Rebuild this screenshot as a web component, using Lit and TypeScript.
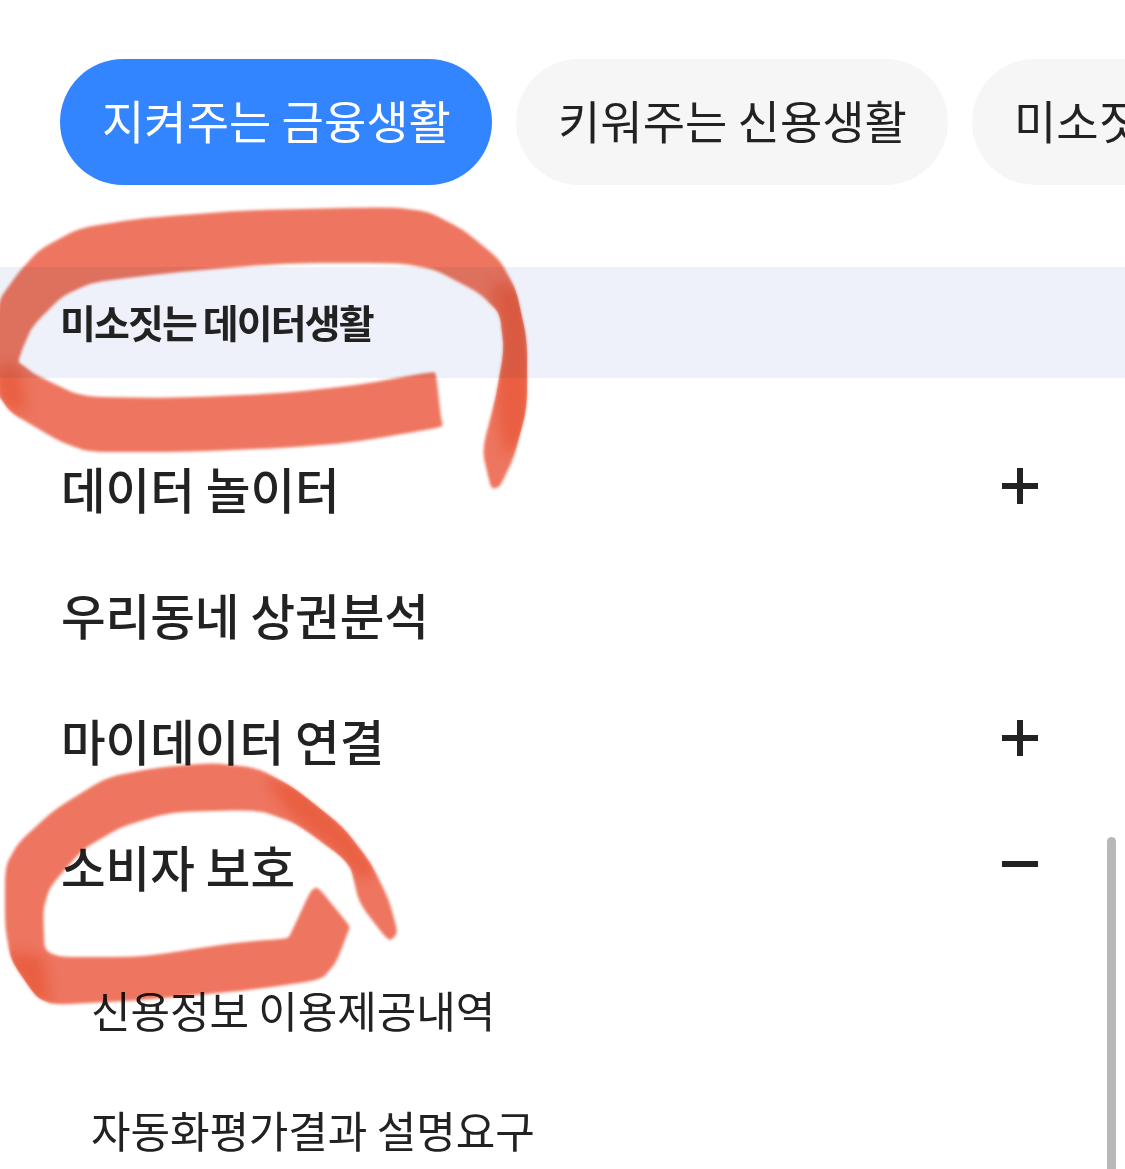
import { LitElement, html, css, svg } from "lit";
import { customElement } from "lit/decorators.js";

type Pt = [number, number];

// Rounds each corner of a hand-traced outline, keeping the long edges straight like a marker stroke.
const outline = (p: Pt[], cut = 0.28) => {
  const at = (a: Pt, b: Pt, t: number): Pt => [
    +(a[0] + (b[0] - a[0]) * t).toFixed(1),
    +(a[1] + (b[1] - a[1]) * t).toFixed(1),
  ];
  let d = "";
  p.forEach((c, i) => {
    const prev = p[(i + p.length - 1) % p.length];
    const next = p[(i + 1) % p.length];
    const a = at(c, prev, cut);
    const b = at(c, next, cut);
    d += `${i ? "L" : "M"}${a[0]} ${a[1]} Q${c[0]} ${c[1]} ${b[0]} ${b[1]} `;
  });
  return d + "Z";
};

const loopOne: Pt[] = [
  [432, 372], [436, 373], [441, 418], [443, 426], [436, 428], [357, 442], [286, 448], [179, 452], [89, 452], [61, 442], [11, 413], [-3, 393],
  [-3, 303], [18, 273], [39, 250], [79, 228], [143, 218], [250, 210], [393, 207], [429, 212], [464, 230], [500, 260],
  [516, 290], [527, 340], [527, 407], [514, 457], [500, 487], [491, 489], [482, 450], [496, 397], [504, 350], [500, 313],
  [479, 293], [436, 270], [400, 263], [286, 263], [179, 272], [93, 282], [61, 297], [32, 327], [22, 350], [18, 362], [25, 367], [36, 375],
  [82, 397], [179, 398], [286, 393], [357, 385],
];

const loopTwo: Pt[] = [
  [389, 942], [398, 933], [389, 900], [371, 863], [343, 827], [293, 787], [257, 768], [214, 763], [161, 767], [107, 777],
  [54, 810], [18, 843], [5, 867], [5, 927], [11, 960], [36, 997], [54, 1005], [143, 1000], [250, 990], [321, 980],
  [336, 963], [347, 935], [350, 927], [345, 920], [318, 887], [311, 890], [291, 933], [288, 938], [280, 939], [232, 943], [143, 957], [45, 957], [43, 910], [50, 887],
  [82, 850], [121, 827], [171, 812], [257, 810], [296, 823], [350, 863], [359, 903],
];

const darkOne: Pt[] = [
  [490, 280], [530, 290], [532, 430], [505, 460], [495, 400], [502, 340],
];
const darkTwo: Pt[] = [
  [262, 775], [300, 785], [350, 830], [378, 875], [360, 880], [335, 850], [290, 815],
];
const darkThree: Pt[] = [
  [0, 950], [45, 955], [50, 1010], [30, 1000],
];
const darkFour: Pt[] = [
  [-5, 370], [18, 362], [28, 415], [0, 405],
];

const rows = [
  { label: "데이터 놀이터", sign: "plus" },
  { label: "우리동네 상권분석", sign: "" },
  { label: "마이데이터 연결", sign: "plus" },
  { label: "소비자 보호", sign: "minus" },
];

const subRows = ["신용정보 이용제공내역", "자동화평가결과 설명요구"];

@customElement("app-root")
export class AppRoot extends LitElement {
  static styles = css`
    :host {
      display: block;
      position: relative;
      height: 1169px;
      overflow: hidden;
      background: #fff;
      color: #222;
      font-family: "Noto Sans CJK KR", "Noto Sans", sans-serif;
    }
    .tabs {
      display: flex;
      gap: 24px;
      padding: 59px 0 0 60px;
      overflow: hidden;
    }
    .tab {
      flex: none;
      width: 432px;
      height: 126px;
      box-sizing: border-box;
      display: flex;
      align-items: center;
      padding: 0 0 6px 42px;
      border-radius: 63px;
      background: #f6f6f6;
      font-size: 46px;
      white-space: nowrap;
      overflow: hidden;
    }
    .tab.on {
      background: #3385ff;
      color: #fff;
    }
    .band {
      margin-top: 82px;
      height: 111px;
      box-sizing: border-box;
      display: flex;
      align-items: center;
      padding: 0 0 4px 60px;
      background: #eef1f9;
      font-size: 39px;
      font-weight: 700;
      letter-spacing: -1.9px;
    }
    .rows {
      margin-top: 46px;
    }
    .row {
      height: 126px;
      box-sizing: border-box;
      display: flex;
      align-items: center;
      justify-content: space-between;
      padding: 2px 87px 0 61px;
      font-size: 48.5px;
      font-weight: 500;
    }
    .sign {
      position: relative;
      width: 36px;
      height: 36px;
      margin-top: -4px;
    }
    .sign::before,
    .sign.plus::after {
      content: "";
      position: absolute;
      background: #222;
    }
    .sign::before {
      left: 0;
      right: 0;
      top: 15px;
      height: 6px;
    }
    .sign.plus::after {
      top: 0;
      bottom: 0;
      left: 15px;
      width: 6px;
    }
    .subs {
      margin-top: 24px;
    }
    .sub {
      height: 120px;
      box-sizing: border-box;
      display: flex;
      align-items: center;
      padding: 0 0 6px 91px;
      font-size: 43px;
      letter-spacing: -0.1px;
    }
    .scroll {
      position: absolute;
      left: 1107px;
      top: 837px;
      width: 9px;
      height: 340px;
      border-radius: 5px;
      background: #b8b8b8;
    }
    .ink {
      position: absolute;
      inset: 0;
      width: 1125px;
      height: 1169px;
      mix-blend-mode: multiply;
      pointer-events: none;
    }
    .stroke {
      fill: #ee7660;
      filter: blur(1.4px);
    }
    .deep {
      fill: #e8593a;
      opacity: 0.8;
      filter: blur(7px);
    }
  `;

  render() {
    const one = outline(loopOne);
    const two = outline(loopTwo);
    return html`
      <div class="tabs">
        <div class="tab on">지켜주는 금융생활</div>
        <div class="tab">키워주는 신용생활</div>
        <div class="tab">미소짓는 데이터생활</div>
      </div>
      <div class="band">미소짓는 데이터생활</div>
      <div class="rows">
        ${rows.map(
          (r) => html`<div class="row">
            <span>${r.label}</span>
            ${r.sign ? html`<span class="sign ${r.sign}"></span>` : ""}
          </div>`
        )}
      </div>
      <div class="subs">
        ${subRows.map((s) => html`<div class="sub">${s}</div>`)}
      </div>
      <div class="scroll"></div>
      <svg class="ink" viewBox="0 0 1125 1169">
        <defs>
          <clipPath id="clip-one"><path d=${one}></path></clipPath>
          <clipPath id="clip-two"><path d=${two}></path></clipPath>
        </defs>
        <path class="stroke" d=${one}></path>
        <path class="stroke" d=${two}></path>
        <g clip-path="url(#clip-one)">
          ${[darkOne, darkFour].map((p) => svg`<path class="deep" d=${outline(p)}></path>`)}
        </g>
        <g clip-path="url(#clip-two)">
          ${[darkTwo, darkThree].map((p) => svg`<path class="deep" d=${outline(p)}></path>`)}
        </g>
      </svg>
    `;
  }
}
